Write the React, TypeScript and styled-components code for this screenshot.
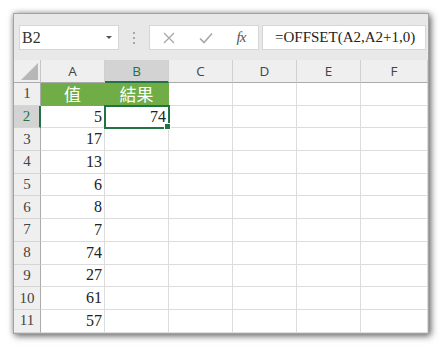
import React from "react";
import styled, { createGlobalStyle, css } from "styled-components";

const GlobalStyle = createGlobalStyle`
  html, body { margin: 0; padding: 0; background: #ffffff; }
  * { box-sizing: border-box; }
`;

const GREEN = "#217346";
const SERIF = `"Liberation Serif", "Noto Sans CJK TC", serif`;
const SANS = `"Open Sans", "Noto Sans", sans-serif`;

const Page = styled.div`
  padding: 13px 0 0 13px;
  width: 440px;
  height: 347px;
`;

const Window = styled.div`
  width: 416px;
  height: 321px;
  border: 1px solid #a2a2a2;
  background: #e8e8e8;
  box-shadow: 2px 2px 7px rgba(0, 0, 0, 0.55), 0 0 6px rgba(0, 0, 0, 0.2);
  display: flex;
  flex-direction: column;
  overflow: hidden;
`;

const FormulaBar = styled.div`
  height: 46px;
  flex: none;
  display: flex;
  align-items: flex-start;
  padding: 11px 0 0 5px;
  background: #e8e8e8;
`;

const Box = styled.div<{ $w: number; $gap?: number }>`
  width: ${(p) => p.$w}px;
  height: 25px;
  margin-left: ${(p) => p.$gap ?? 0}px;
  background: #ffffff;
  border: 1px solid #d6d6d6;
  display: flex;
  align-items: center;
  flex: none;
`;

const NameText = styled.span`
  font-family: ${SERIF};
  font-size: 16px;
  color: #333;
  padding-left: 2px;
  flex: 1;
`;

const Caret = styled.span`
  width: 0;
  height: 0;
  border-left: 3px solid transparent;
  border-right: 3px solid transparent;
  border-top: 3px solid #555;
  margin-right: 6px;
`;

const Grip = styled.div`
  width: 30px;
  height: 25px;
  display: flex;
  flex-direction: column;
  align-items: center;
  justify-content: center;
  gap: 3px;
  flex: none;
`;

const Dot = styled.span`
  width: 2px;
  height: 2px;
  background: #a9a9a9;
`;

const IconSlot = styled.span<{ $w: number }>`
  width: ${(p) => p.$w}px;
  display: flex;
  align-items: center;
  justify-content: center;
  color: #a8a8a8;
`;

const Fx = styled.span`
  font-family: ${SERIF};
  font-style: italic;
  font-size: 15px;
  color: #555;
  letter-spacing: -1px;
`;

const FormulaText = styled.span`
  font-family: ${SERIF};
  font-size: 15px;
  color: #222;
  padding-left: 12px;
  white-space: nowrap;
`;

const Sheet = styled.div`
  flex: 1;
  display: grid;
  grid-template-columns: 27px repeat(5, 64px) 1fr;
  grid-template-rows: 23px repeat(11, 22.7px);
  background: #ffffff;
  align-content: start;
`;

const Corner = styled.div`
  background: #efefef;
  border-right: 1px solid #c6c6c6;
  border-bottom: 1px solid #ababab;
  position: relative;
  &::after {
    content: "";
    position: absolute;
    right: 2px;
    bottom: 2px;
    width: 0;
    height: 0;
    border-left: 17px solid transparent;
    border-bottom: 17px solid #b7b7b7;
  }
`;

const ColHead = styled.div<{ $sel?: boolean }>`
  background: ${(p) => (p.$sel ? "#d3d3d3" : "#efefef")};
  border-right: 1px solid #d0d0d0;
  border-bottom: ${(p) => (p.$sel ? `2px solid ${GREEN}` : "1px solid #ababab")};
  display: flex;
  align-items: center;
  justify-content: center;
  font-family: ${SANS};
  font-size: 13.5px;
  color: ${(p) => (p.$sel ? GREEN : "#444")};
  padding-top: ${(p) => (p.$sel ? "1px" : "0")};
`;

const RowHead = styled.div<{ $sel?: boolean }>`
  background: ${(p) => (p.$sel ? "#d3d3d3" : "#efefef")};
  border-bottom: 1px solid #d6d6d6;
  border-right: ${(p) => (p.$sel ? `2px solid ${GREEN}` : "1px solid #ababab")};
  display: flex;
  align-items: center;
  justify-content: center;
  font-family: ${SERIF};
  font-size: 15px;
  color: ${(p) => (p.$sel ? GREEN : "#444")};
`;

const Cell = styled.div<{ $head?: boolean; $sel?: boolean }>`
  border-right: 1px solid #dcdcdc;
  border-bottom: 1px solid #dcdcdc;
  display: flex;
  align-items: center;
  justify-content: flex-end;
  padding-right: 2px;
  font-family: ${SERIF};
  font-size: 16px;
  color: #222;
  position: relative;
  ${(p) =>
    p.$head &&
    css`
      background: #70ad47;
      border-right-color: #70ad47;
      border-bottom-color: #70ad47;
      justify-content: center;
      color: #ffffff;
      font-family: "Noto Sans CJK TC", serif;
      font-size: 17px;
      padding-right: 0;
    `}
  ${(p) =>
    p.$sel &&
    css`
      outline: 2px solid ${GREEN};
      outline-offset: -1px;
      z-index: 1;
      &::after {
        content: "";
        position: absolute;
        right: -3px;
        bottom: -3px;
        width: 5px;
        height: 5px;
        background: ${GREEN};
        border: 1px solid #fff;
      }
    `}
`;

const cols = ["A", "B", "C", "D", "E", "F"];
const values = [5, 17, 13, 6, 8, 7, 74, 27, 61, 57];

export default function App() {
  return (
    <>
      <GlobalStyle />
      <Page>
        <Window>
          <FormulaBar>
            <Box $w={100}>
              <NameText>B2</NameText>
              <Caret />
            </Box>
            <Grip>
              <Dot />
              <Dot />
              <Dot />
            </Grip>
            <Box $w={110}>
              <IconSlot $w={38}>
                <svg width="12" height="12" viewBox="0 0 12 12">
                  <path d="M1 1 L11 11 M11 1 L1 11" stroke="#a8a8a8" strokeWidth="1.3" fill="none" />
                </svg>
              </IconSlot>
              <IconSlot $w={36}>
                <svg width="14" height="12" viewBox="0 0 14 12">
                  <path d="M1 6.5 L5 10.5 L13 1.5" stroke="#a8a8a8" strokeWidth="1.6" fill="none" />
                </svg>
              </IconSlot>
              <IconSlot $w={34}>
                <Fx>fx</Fx>
              </IconSlot>
            </Box>
            <Box $w={164} $gap={3}>
              <FormulaText>=OFFSET(A2,A2+1,0)</FormulaText>
            </Box>
          </FormulaBar>
          <Sheet>
            <Corner />
            {cols.map((c) => (
              <ColHead key={c} $sel={c === "B"}>
                {c}
              </ColHead>
            ))}
            <RowHead>1</RowHead>
            <Cell $head>值</Cell>
            <Cell $head>結果</Cell>
            {cols.slice(2).map((c) => (
              <Cell key={c} />
            ))}
            {values.map((v, i) => (
              <React.Fragment key={i}>
                <RowHead $sel={i === 0}>{i + 2}</RowHead>
                <Cell>{v}</Cell>
                <Cell $sel={i === 0}>{i === 0 ? 74 : ""}</Cell>
                {cols.slice(2).map((c) => (
                  <Cell key={c} />
                ))}
              </React.Fragment>
            ))}
          </Sheet>
        </Window>
      </Page>
    </>
  );
}
